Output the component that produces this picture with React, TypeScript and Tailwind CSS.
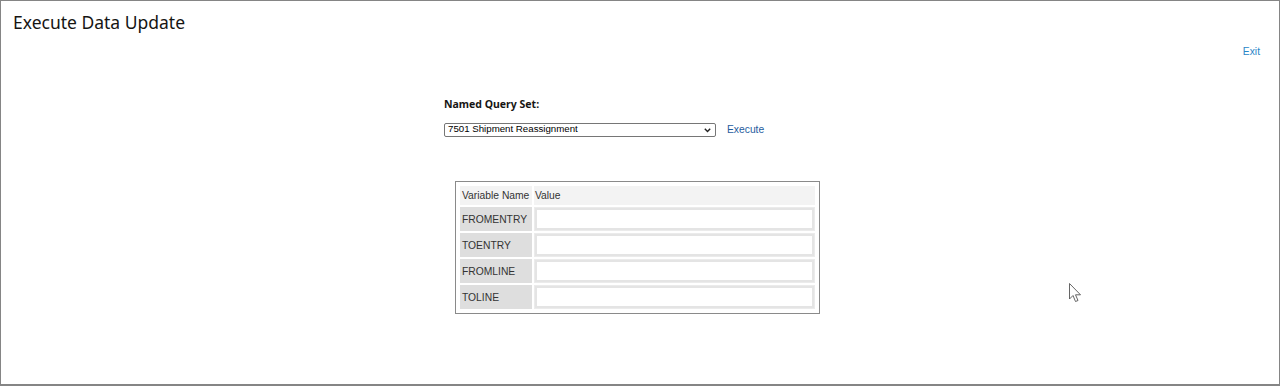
import React from 'react';

const vars = ['FROMENTRY', 'TOENTRY', 'FROMLINE', 'TOLINE'];

const App = () => {
  return (
    <div className="relative w-[1280px] h-[386px] border border-b-2 border-[#858585] bg-white font-['Liberation_Sans',Arial,sans-serif] text-[#333]">
      <div className="flex justify-between">
        <h1 className="pl-[12px] pt-[9px] text-[17.5px] leading-[24px] text-[#161513] font-['Noto_Sans',sans-serif]">Execute Data Update</h1>
      </div>
      <div className="flex justify-end pr-[19px] mt-[11px]">
        <a href="#" className="text-[10.3px] leading-[14px] text-[#2a86c8]">Exit</a>
      </div>

      <div className="pl-[443px] mt-[38px]">
        <div className="text-[10.5px] leading-[14px] font-bold text-[#161513] font-['Noto_Sans',sans-serif]">Named Query Set:</div>
        <div className="flex items-center mt-[11px]">
          <div className="relative w-[272px] h-[14px] border border-[#767676] rounded-[2px] bg-white flex items-center pl-[3px] text-[9.7px] text-black">
            7501 Shipment Reassignment
            <svg className="absolute right-[4px] top-[4px]" width="7" height="5" viewBox="0 0 7 5">
              <path d="M0.8 0.8 L3.5 3.6 L6.2 0.8" fill="none" stroke="#222" strokeWidth="1.4" />
            </svg>
          </div>
          <a href="#" className="ml-[11px] text-[10.3px] text-[#1f5c9e]">Execute</a>
        </div>
      </div>

      <div className="pl-[454px] mt-[44px]">
        <div className="w-[365px] border border-[#8a8a8a] p-[2px]">
          <table className="w-full border-separate border-spacing-[2px] text-[10.3px] text-[#333]">
            <thead>
              <tr className="bg-[#f3f3f3]">
                <th className="text-left font-normal h-[19px] pl-[2px] w-[72px] whitespace-nowrap">Variable Name</th>
                <th className="text-left font-normal pl-[1px]">Value</th>
              </tr>
            </thead>
            <tbody>
              {vars.map(v => (
                <tr key={v}>
                  <td className="bg-[#dedede] h-[24px] pl-[2px] whitespace-nowrap">{v}</td>
                  <td className="bg-[#ebebeb] p-[1px]">
                    <input type="text" className="block w-full h-[22px] bg-white border-2 border-[#e4e4e4] outline-none" />
                  </td>
                </tr>
              ))}
            </tbody>
          </table>
        </div>
      </div>

      <svg className="absolute left-[1068px] top-[282px]" width="13" height="20" viewBox="0 0 13 20">
        <path d="M0.5 0.5 L0.5 16 L4 12.5 L6.5 18.5 L9 17.5 L6.5 11.8 L11.5 11.8 Z" fill="white" stroke="#555" strokeWidth="0.9" />
      </svg>
    </div>
  );
};

export default App;
